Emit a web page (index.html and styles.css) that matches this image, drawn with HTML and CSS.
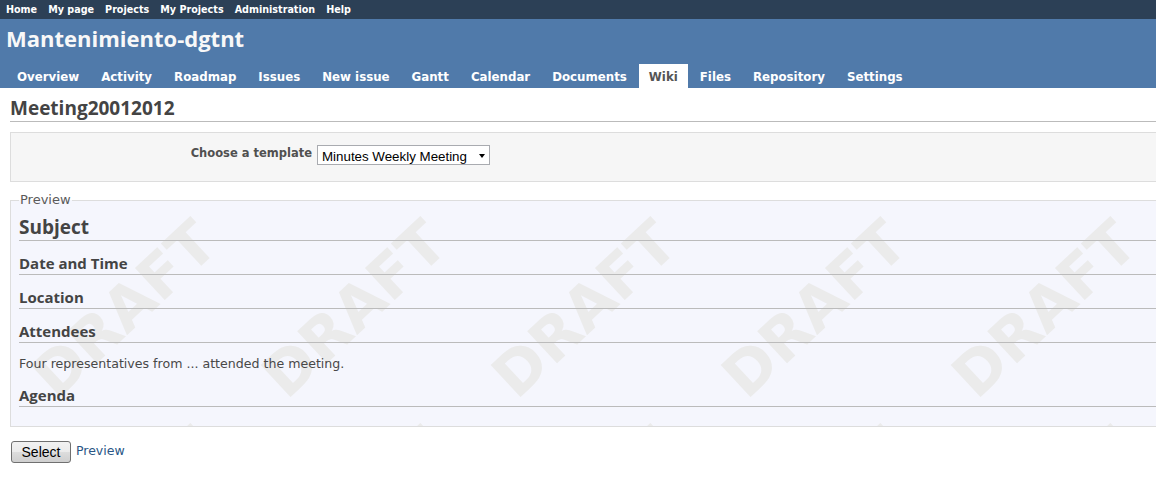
FILE: index.html
```html
<!DOCTYPE HTML>
<html lang="en-US">
<head>
	<meta charset="UTF-8">
	<title>Meeting20012012 - Mantenimiento-dgtnt</title>
	<link rel="stylesheet" href="styles.css">
</head>
<body>
	<div class="top_menu">
		<a href="#">Home</a>
		<a href="#">My page</a>
		<a href="#">Projects</a>
		<a href="#">My Projects</a>
		<a href="#">Administration</a>
		<a href="#">Help</a>
	</div>
	<!-- top_menu end -->

	<div class="header">
		<h1 class="project_title">Mantenimiento-dgtnt</h1>
		<ul class="main_menu">
			<li><a href="#">Overview</a></li>
			<li><a href="#">Activity</a></li>
			<li><a href="#">Roadmap</a></li>
			<li><a href="#">Issues</a></li>
			<li><a href="#">New issue</a></li>
			<li><a href="#">Gantt</a></li>
			<li><a href="#">Calendar</a></li>
			<li><a href="#">Documents</a></li>
			<li><a href="#" class="selected">Wiki</a></li>
			<li><a href="#">Files</a></li>
			<li><a href="#">Repository</a></li>
			<li><a href="#">Settings</a></li>
		</ul>
	</div>
	<!-- header end -->

	<div class="content">
		<h2 class="page_title">Meeting20012012</h2>

		<div class="box template_box">
			<label for="template_id">Choose a template</label>
			<span class="select_wrap">
				<select id="template_id" name="template_id">
					<option>Minutes Weekly Meeting</option>
				</select>
			</span>
		</div>

		<fieldset class="preview">
			<legend>Preview</legend>
			<div class="watermark">
				<span class="draft_cell"><span>DRAFT</span></span>
				<span class="draft_cell"><span>DRAFT</span></span>
				<span class="draft_cell"><span>DRAFT</span></span>
				<span class="draft_cell"><span>DRAFT</span></span>
				<span class="draft_cell"><span>DRAFT</span></span>
				<span class="draft_cell"><span>DRAFT</span></span>
				<span class="draft_cell"><span>DRAFT</span></span>
				<span class="draft_cell"><span>DRAFT</span></span>
				<span class="draft_cell"><span>DRAFT</span></span>
				<span class="draft_cell"><span>DRAFT</span></span>
				<span class="draft_cell"><span>DRAFT</span></span>
				<span class="draft_cell"><span>DRAFT</span></span>
			</div>
			<div class="wiki">
				<h1>Subject</h1>
				<h3>Date and Time</h3>
				<h3>Location</h3>
				<h3>Attendees</h3>
				<p>Four representatives from ... attended the meeting.</p>
				<h3>Agenda</h3>
			</div>
		</fieldset>
		<!-- preview end -->

		<div class="actions">
			<button type="button" class="select_btn">Select</button>
			<a href="#" class="preview_link">Preview</a>
		</div>
	</div>
	<!-- content end -->
</body>
</html>
```

FILE: styles.css
```css
html, body {
	overflow:hidden;
}
body {
	margin:0;
	background:#fff;
	color:#484848;
	font:12px/15px "DejaVu Sans", Verdana, sans-serif;
}
a {
	color:#2A5685;
	text-decoration:none;
}

/* top bar */
.top_menu {
	height:16px;
	padding:2px 0 1px 6px;
	background:#2C4056;
	font-size:9.6px;
	line-height:16px;
	white-space:nowrap;
}
.top_menu a {
	margin-right:8px;
	color:#fff;
	font-weight:bold;
}

/* header */
.header {
	display:flex;
	flex-direction:column;
	height:63px;
	padding:6px 0 0 6px;
	background:#507AAA;
	color:#f8f8f8;
}
.project_title {
	margin:0;
	font:bold 22px/26px "Open Sans", "Liberation Sans", sans-serif;
}
.main_menu {
	display:flex;
	gap:2px;
	margin:auto 0 0 1px;
	padding:0;
	list-style:none;
}
.main_menu a {
	display:block;
	padding:5px 10px 3px;
	color:#fff;
	font-size:11.8px;
	font-weight:bold;
	line-height:16px;
	white-space:nowrap;
}
.main_menu a.selected {
	background:#fff;
	color:#555;
}

/* content */
.content {
	margin-right:-40px;
	padding:9px 10px 0;
}
.page_title {
	margin:0;
	padding:0 0 2px;
	border-bottom:1px solid #bbb;
	color:#444;
	font:bold 19px/22px "Open Sans", "Liberation Sans", sans-serif;
}
.box {
	background:#f6f6f6;
	border:1px solid #ddd;
	color:#505050;
}
.template_box {
	display:flex;
	align-items:flex-start;
	height:48px;
	margin-top:10px;
}
.template_box label {
	width:301px;
	margin:13px 5px 0 0;
	font-size:11.5px;
	font-weight:bold;
	text-align:right;
}
.select_wrap {
	position:relative;
	margin-top:12px;
}
.select_wrap select {
	display:block;
	width:173px;
	height:20px;
	box-sizing:border-box;
	padding:2px 0 0 4px;
	border:1px solid #a9abb0;
	background:#fff;
	color:#000;
	font:13.33px "Liberation Sans", Arial, sans-serif;
	appearance:none;
	-webkit-appearance:none;
	border-radius:0;
}
.select_wrap:after {
	content:"";
	position:absolute;
	right:5px;
	top:9px;
	border:3.5px solid transparent;
	border-top:4px solid #000;
	border-bottom:0;
	pointer-events:none;
}

/* preview */
.preview {
	position:relative;
	margin:11px 0 0;
	padding:7px 8px 19px;
	border:1px solid #ddd;
	background:#f5f6fd;
	min-width:0;
}
.preview legend {
	padding:0 1px;
	color:#5a5a5a;
	font-size:13px;
	line-height:14px;
}
.watermark {
	position:absolute;
	top:-2px;
	left:-2px;
	right:0;
	bottom:0;
	display:grid;
	grid-template-columns:repeat(6, 230px);
	grid-auto-rows:207px;
	overflow:hidden;
}
.draft_cell {
	display:flex;
	align-items:center;
	justify-content:center;
}
.draft_cell span {
	transform:rotate(-43deg);
	color:#ebebeb;
	font:bold 60px/1 "DejaVu Sans", Verdana, sans-serif;
	white-space:nowrap;
}
.wiki {
	position:relative;
	z-index:1;
}
.wiki h1, .wiki h3 {
	margin:0;
	padding:1px 0;
	border-bottom:1px solid #bbb;
	color:#444;
	font-family:"Open Sans", "Liberation Sans", sans-serif;
	font-weight:bold;
}
.wiki h1 {
	font-size:19px;
	line-height:24px;
}
.wiki h3 {
	margin-top:12px;
	font-size:15px;
	line-height:19px;
}
.wiki p {
	margin:13px 0 14px;
	font-size:12.6px;
}

/* actions */
.actions {
	display:flex;
	align-items:flex-start;
	margin:14px 0 0 1px;
}
.select_btn {
	width:60px;
	height:22px;
	padding:0;
	border:1px solid #707070;
	border-radius:3px;
	background:linear-gradient(#f2f2f2 0%, #ebebeb 50%, #dddddd 50%, #cfcfcf 100%);
	color:#000;
	font:14px "Liberation Sans", Arial, sans-serif;
}
.preview_link {
	margin:2px 0 0 5px;
	font-size:12.5px;
}
```
